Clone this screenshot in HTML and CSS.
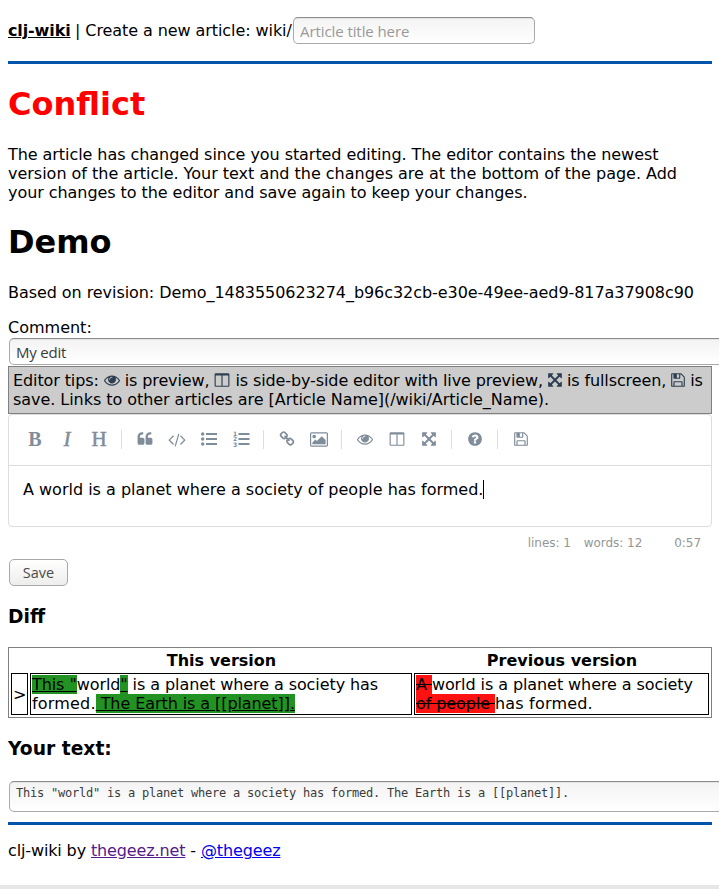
FILE: index.html
```html
<!DOCTYPE html>
<html lang="en">
<head>
<meta charset="utf-8">
<title>clj-wiki</title>
<link rel="stylesheet" href="styles.css">
</head>
<body>
<svg class="defs" xmlns="http://www.w3.org/2000/svg">
<symbol id="eye" viewBox="0 0 1792 1792"><path d="M1664 960q-152-236-381-353 61 104 61 225 0 185-131.500 316.500t-316.500 131.500-316.500-131.500-131.500-316.500q0-121 61-225-229 117-381 353 133 205 333.500 326.500t434.500 121.500 434.500-121.500 333.500-326.500zm-720-384q0-20-14-34t-34-14q-125 0-214.500 89.500t-89.500 214.500q0 20 14 34t34 14 34-14 14-34q0-86 61-147t147-61q20 0 34-14t14-34zm848 384q0 34-20 69-140 230-376.500 368.500t-499.500 138.500-499.500-139-376.500-368q-20-35-20-69t20-69q140-229 376.500-368t499.500-139 499.500 139 376.500 368q20 35 20 69z"/></symbol>
<symbol id="columns" viewBox="0 0 1792 1792"><path d="M224 1536h608v-1152h-640v1120q0 13 9.500 22.500t22.500 9.500zm1376-32v-1120h-640v1152h608q13 0 22.500-9.500t9.500-22.500zm128-1216v1216q0 66-47 113t-113 47h-1344q-66 0-113-47t-47-113v-1216q0-66 47-113t113-47h1344q66 0 113 47t47 113z"/></symbol>
<symbol id="arrows" viewBox="0 0 1792 1792"><path d="M1411 541l-355 355 355 355 144-144q29-31 70-14 39 17 39 59v448q0 26-19 45t-45 19h-448q-42 0-59-40-17-39 14-69l144-144-355-355-355 355 144 144q31 30 14 69-17 40-59 40h-448q-26 0-45-19t-19-45v-448q0-42 40-59 39-17 69 14l144 144 355-355-355-355-144 144q-19 19-45 19-12 0-24-5-40-17-40-59v-448q0-26 19-45t45-19h448q42 0 59 40 17 39-14 69l-144 144 355 355 355-355-144-144q-31-30-14-69 17-40 59-40h448q26 0 45 19t19 45v448q0 42-39 59-13 5-25 5-26 0-45-19z"/></symbol>
<symbol id="floppy" viewBox="0 0 1792 1792"><path d="M512 1536h768v-384h-768v384zm896 0h128v-896q0-14-10-38.500t-20-34.500l-281-281q-10-10-34-20t-39-10v416q0 40-28 68t-68 28h-576q-40 0-68-28t-28-68v-416h-128v1280h128v-416q0-40 28-68t68-28h832q40 0 68 28t28 68v416zm-384-928v-320q0-13-9.500-22.500t-22.500-9.500h-192q-13 0-22.500 9.500t-9.500 22.500v320q0 13 9.500 22.500t22.500 9.500h192q13 0 22.500-9.500t9.500-22.500zm640 32v928q0 40-28 68t-68 28h-1344q-40 0-68-28t-28-68v-1344q0-40 28-68t68-28h928q40 0 88 20t76 48l280 280q28 28 48 76t20 88z"/></symbol>
<symbol id="help" viewBox="0 0 1792 1792"><path d="M1024 1376v-192q0-14-9-23t-23-9h-192q-14 0-23 9t-9 23v192q0 14 9 23t23 9h192q14 0 23-9t9-23zm256-672q0-88-55.500-163t-138.500-116-170-41q-243 0-371 213-15 24 8 42l132 100q7 6 19 6 16 0 25-12 53-68 86-92 34-24 86-24 48 0 85.500 26t37.500 59q0 38-20 61t-68 45q-63 28-115.500 86.500t-52.500 125.500v36q0 14 9 23t23 9h192q14 0 23-9t9-23q0-19 21.500-49.500t54.500-49.500q32-18 49-28.500t46-35 44.500-48 28-60.500 12.500-81zm384 192q0 209-103 385.500t-279.500 279.500-385.500 103-385.500-103-279.500-279.500-103-385.500 103-385.500 279.500-279.500 385.500-103 385.500 103 279.500 279.500 103 385.500z"/></symbol>
<symbol id="quote" viewBox="0 0 1792 1792"><path d="M832 960v384q0 80-56 136t-136 56h-384q-80 0-136-56t-56-136v-704q0-104 40.500-198.500t109.500-163.500 163.500-109.500 198.500-40.500h64q26 0 45 19t19 45v128q0 26-19 45t-45 19h-64q-106 0-181 75t-75 181v32q0 40 28 68t68 28h224q80 0 136 56t56 136zm896 0v384q0 80-56 136t-136 56h-384q-80 0-136-56t-56-136v-704q0-104 40.500-198.500t109.500-163.500 163.500-109.500 198.500-40.500h64q26 0 45 19t19 45v128q0 26-19 45t-45 19h-64q-106 0-181 75t-75 181v32q0 40 28 68t68 28h224q80 0 136 56t56 136z"/></symbol>
<symbol id="code" viewBox="-64 0 1920 1792"><path d="M553 1399l-50 50q-10 10-23 10t-23-10l-466-466q-10-10-10-23t10-23l466-466q10-10 23-10t23 10l50 50q10 10 10 23t-10 23l-393 393 393 393q10 10 10 23t-10 23zm591-1067l-373 1291q-4 13-15.500 19.500t-23.500 2.500l-62-17q-13-4-19.500-15.500t-2.500-24.500l373-1291q4-13 15.500-19.500t23.500-2.500l62 17q13 4 19.500 15.500t2.500 24.500zm657 651l-466 466q-10 10-23 10t-23-10l-50-50q-10-10-10-23t10-23l393-393-393-393q-10-10-10-23t10-23l50-50q10-10 23-10t23 10l466 466q10 10 10 23t-10 23z"/></symbol>
<symbol id="image" viewBox="-64 0 1920 1792"><path d="M576 576q0 80-56 136t-136 56-136-56-56-136 56-136 136-56 136 56 56 136zm1024 384v448h-1408v-192l320-320 160 160 512-512zm96-704h-1600q-13 0-22.500 9.500t-9.500 22.500v1216q0 13 9.500 22.500t22.500 9.500h1600q13 0 22.500-9.500t9.500-22.500v-1216q0-13-9.500-22.500t-22.500-9.500zm160 32v1216q0 66-47 113t-113 47h-1600q-66 0-113-47t-47-113v-1216q0-66 47-113t113-47h1600q66 0 113 47t47 113z"/></symbol>
<symbol id="link" viewBox="0 0 1792 1792"><path d="M1520 1216q0-40-28-68l-208-208q-28-28-68-28-42 0-72 32 3 3 19 18.500t21.500 21.500 15 19 13 25.500 3.500 27.500q0 40-28 68t-68 28q-15 0-27.500-3.500t-25.500-13-19-15-21.500-21.500-18.500-19q-33 31-33 73 0 40 28 68l206 207q27 27 68 27 40 0 68-26l147-146q28-28 28-67zm-703-705q0-40-28-68l-206-207q-28-28-68-28-39 0-68 27l-147 146q-28 28-28 67 0 40 28 68l208 208q27 27 68 27 42 0 72-31-3-3-19-18.500t-21.500-21.500-15-19-13-25.500-3.500-27.500q0-40 28-68t68-28q15 0 27.500 3.500t25.500 13 19 15 21.500 21.500 18.500 19q33-31 33-73zm895 705q0 120-85 203l-147 146q-83 83-203 83-121 0-204-85l-206-207q-83-83-83-203 0-123 88-209l-88-88q-86 88-208 88-120 0-204-84l-208-208q-84-84-84-204t85-203l147-146q83-83 203-83 121 0 204 85l206 207q83 83 83 203 0 123-88 209l88 88q86-88 208-88 120 0 204 84l208 208q84 84 84 204z"/></symbol>
<symbol id="list" viewBox="0 0 16 16"><circle cx="1.700" cy="3" r="1.700"/><circle cx="1.700" cy="8" r="1.700"/><circle cx="1.700" cy="13" r="1.700"/><path d="M5 2h11v2H5zM5 7h11v2H5zM5 12h11v2H5z"/></symbol>
</svg>
<header>
  <a class="brand" href="#">clj-wiki</a><span class="create">&nbsp;| Create a new article: wiki/</span><input class="field title" placeholder="Article title here">
</header>
<hr>
<h1 class="conflict">Conflict</h1>
<p>The article has changed since you started editing. The editor contains the newest <span class="even">version of the article. Your text and the changes are at the bottom of the page. Add</span> your changes to the editor and save again to keep your changes.</p>
<h1>Demo</h1>
<p>Based on revision: Demo_1483550623274_b96c32cb-e30e-49ee-aed9-817a37908c90</p>
<label for="comment">Comment:</label>
<input class="field comment" id="comment" value="My edit">
<div class="tips">Editor tips: <svg class="tip"><use href="#eye"/></svg> is preview, <svg class="tip"><use href="#columns"/></svg> is side-by-side editor with live preview, <svg class="tip narrow"><use href="#arrows"/></svg> is fullscreen, <svg class="tip narrow"><use href="#floppy"/></svg> is <span class="more">save. Links to other articles are [Article Name](/wiki/Article_Name).</span></div>
<div class="editor">
  <div class="toolbar">
    <a class="bold">B</a><a class="italic">I</a><a class="heading">H</a><i></i>
    <a><svg><use href="#quote"/></svg></a><a><svg class="wide"><use href="#code"/></svg></a><a><svg><use href="#list"/></svg></a><a><svg class="ordered" viewBox="0 0 17 18"><path d="M5.500 3h11v2h-11zM5.500 8h11v2h-11zM5.500 13h11v2h-11z"/><text x="0" y="6">1</text><text x="0" y="11">2</text><text x="0" y="17">3</text></svg></a><i></i>
    <a><svg><use href="#link"/></svg></a><a><svg class="wide"><use href="#image"/></svg></a><i></i>
    <a><svg><use href="#eye"/></svg></a><a><svg><use href="#columns"/></svg></a><a><svg><use href="#arrows"/></svg></a><i></i>
    <a><svg><use href="#help"/></svg></a><i></i>
    <a><svg><use href="#floppy"/></svg></a>
  </div>
  <div class="content">A world is a planet where a society of people has formed.<span class="caret"></span></div>
</div>
<div class="status"><span class="lines">lines: 1</span><span class="words">words: 12</span><span>0:57</span></div>
<button class="save">Save</button>
<h3>Diff</h3>
<table>
  <tr><th class="mark"></th><th class="this">This version</th><th>Previous version</th></tr>
  <tr><td>&gt;</td><td><ins>This "</ins>world<ins>"</ins> is a planet where a society has <span class="loose">formed.</span><ins> The Earth is a [[planet]].</ins></td><td><del>A </del>world is a planet where a society <del>of people </del><span class="loose">has formed.</span></td></tr>
</table>
<h3 class="yours">Your text:</h3>
<textarea class="field source">This "world" is a planet where a society has formed. The Earth is a [[planet]].</textarea>
<hr class="end">
<footer>clj-wiki by <a class="visited" href="#">thegeez.net</a> - <a href="#">@thegeez</a></footer>
<div class="bar"></div>
</body>
</html>
```
FILE: styles.css
```css
* { box-sizing: border-box; }
html { overflow: hidden; background: #fff; }
body { margin: 0; padding: 17px 7px 0 8px; height: 889px; overflow: hidden; font: 16px/19px "DejaVu Sans", sans-serif; color: #000; display: flow-root; }
.defs { display: none; }
header { display: flex; align-items: center; height: 27px; white-space: pre; }
.brand { width: 62px; letter-spacing: -.12px; font-weight: bold; color: #000; }
.create { width: 223px; letter-spacing: -.08px; }
hr { width: 704px; border: 0; height: 3px; margin: 17px 0 0; background: #0054a9; }
h1 { font-size: 32px; line-height: 38px; margin: 21px 0 22px; }
.conflict { color: #f00; }
p { margin: 0 0 16px; letter-spacing: -.062px; }
.even { letter-spacing: -.012px; }
label { display: block; height: 20px; }
.field { display: block; flex: none; margin: 0 0 0 1px; padding: 0 6px; border: 1px solid #aaa; border-top-color: #8c8c8c; border-radius: 5px; background: linear-gradient(#f3f3f3, #fff); box-shadow: inset 0 1px #e4e4e4; color: #3c3c3c; font: 15px "Open Sans", sans-serif; outline: 0; }
.field::placeholder { color: #999; opacity: 1; }
.title { width: 242px; height: 27px; margin-left: 0; letter-spacing: -.08px; }
.comment { width: 730px; height: 27px; letter-spacing: -.2px; }
.tips { margin-top: 1px; height: 48px; width: 704px; padding: 4px; border: 1px solid #808080; background: #ccc; letter-spacing: -.11px; white-space: nowrap; }
.tip { width: 16px; height: 16px; vertical-align: -2px; fill: #2c3e50; }
.narrow { margin: 0 -1px; }
.more { display: block; letter-spacing: -.05px; }
.editor { width: 704px; height: 113px; border: 1px solid #ddd; border-radius: 4px; }
.toolbar { display: flex; align-items: center; height: 51px; padding: 0 0 2px 10px; border-bottom: 1px solid #ddd; }
.toolbar a { display: flex; justify-content: center; align-items: center; width: 32px; height: 30px; flex: none; color: #7f8c9a; fill: currentColor; font: 20px "Liberation Serif", serif; }
.toolbar svg { width: 16px; height: 16px; }
.toolbar .wide { width: 18px; height: 17px; }
.toolbar .ordered { width: 17px; height: 18px; }
.ordered text { font: bold 6px "DejaVu Sans", sans-serif; }
.toolbar .bold { font-weight: bold; }
.toolbar .italic { font-style: italic; -webkit-text-stroke: .6px; }
.toolbar .heading { font-size: 21px; -webkit-text-stroke: .5px; }
.toolbar i { flex: none; width: 1px; height: 19px; margin: 0 7px 0 6px; background: #ddd; }
.content { padding: 14px; white-space: nowrap; }
.caret { display: inline-block; width: 1px; height: 19px; vertical-align: top; background: #000; }
.status { display: flex; justify-content: flex-end; width: 704px; height: 32px; padding: 7px 11px 0 0; font-size: 12px; letter-spacing: -.05px; color: #959694; }
.lines { margin-right: 13px; }
.words { margin-right: 32px; }
.save { display: block; width: 59px; height: 27px; margin: 0 0 0 1px; padding: 0; border: 1px solid #a8a8a8; border-radius: 5px; background: linear-gradient(#fff, #ededeb); color: #4c4c4c; font: 14.5px "Open Sans", sans-serif; }
h3 { margin: 19px 0 19px; font-size: 18.72px; line-height: 23px; }
table { width: 704px; height: 71px; table-layout: fixed; border: 1px solid #808080; border-spacing: 2px; border-collapse: separate; }
th, td { padding: 1px; line-height: 19px; }
th { height: 21px; padding-left: 2px; }
td { border: 1px solid #000; height: 42px; letter-spacing: -.08px; white-space: normal; }
.mark { width: 17px; }
.this { width: 382px; }
.loose { letter-spacing: .18px; }
ins { background: #229322; }
del { background: #ff1111; }
.yours { margin: 19px 0 21px; }
.source { width: 730px; height: 31px; padding: 4px 6px; resize: none; overflow: hidden; white-space: pre; font: 12px/14px "DejaVu Sans Mono", monospace; letter-spacing: -.224px; }
.end { margin-top: 10px; }
footer { margin-top: 16px; letter-spacing: -.13px; }
footer a { color: #00e; }
footer .visited { color: #551a8b; }
.bar { margin: 25px -7px 0 -8px; height: 4px; background: #e6e6e6; }
```
